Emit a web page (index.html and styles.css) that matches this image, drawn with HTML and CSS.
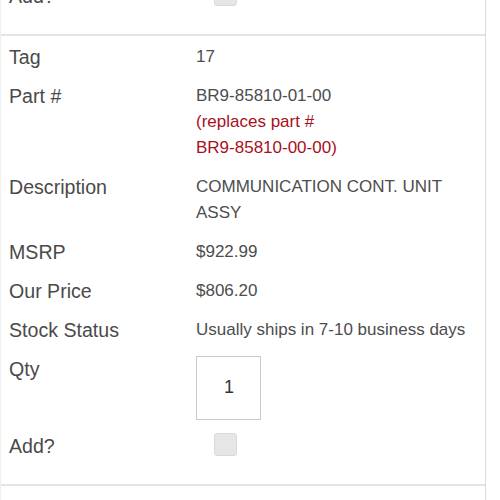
FILE: index.html
```html
<!DOCTYPE html>
<html>
<head>
<meta charset="utf-8">
<link rel="stylesheet" href="styles.css">
</head>
<body>
<div class="list">
  <div class="part part-prev">
    <div class="row">
      <div class="label">Add?</div>
      <div class="value"><input type="checkbox" class="check"></div>
    </div>
  </div>
  <div class="part">
    <div class="row">
      <div class="label">Tag</div>
      <div class="value">17</div>
    </div>
    <div class="row">
      <div class="label">Part #</div>
      <div class="value">BR9-85810-01-00<br><span class="replaces">(replaces part #<br>BR9-85810-00-00)</span></div>
    </div>
    <div class="row">
      <div class="label">Description</div>
      <div class="value">COMMUNICATION CONT. UNIT ASSY</div>
    </div>
    <div class="row">
      <div class="label">MSRP</div>
      <div class="value">$922.99</div>
    </div>
    <div class="row">
      <div class="label">Our Price</div>
      <div class="value">$806.20</div>
    </div>
    <div class="row">
      <div class="label">Stock Status</div>
      <div class="value">Usually ships in 7-10 business days</div>
    </div>
    <div class="row">
      <div class="label">Qty</div>
      <div class="value"><input type="text" class="qty" value="1"></div>
    </div>
    <div class="row">
      <div class="label">Add?</div>
      <div class="value"><input type="checkbox" class="check"></div>
    </div>
  </div>
  <div class="part">
    <div class="row">
      <div class="label">Tag</div>
      <div class="value">18</div>
    </div>
  </div>
</div>
</body>
</html>
```
FILE: styles.css
```css
html, body {
  margin: 0;
  padding: 0;
  background: #fff;
  overflow: hidden;
}
.list {
  width: 486px;
  box-sizing: border-box;
  border-left: 1px solid #f0f0f0;
  border-right: 1px solid #dcdcdc;
  font-family: "Liberation Sans", Arial, sans-serif;
}
.part {
  padding-top: 1px;
  padding-bottom: 19px;
  border-bottom: 2px solid #e4e4e4;
}
.part-prev {
  margin-top: -25px;
}
.row {
  display: grid;
  grid-template-columns: 187px 1fr;
}
.label {
  padding: 6.5px 8px;
  font-size: 19.6px;
  line-height: 26px;
  color: #4a4a4a;
}
.value {
  padding: 6.5px 8px;
  font-size: 17px;
  line-height: 26px;
  color: #4d4d4d;
}
.replaces {
  color: #a8101c;
}
.qty {
  display: block;
  box-sizing: border-box;
  width: 65px;
  height: 64px;
  margin: 0;
  border: 1px solid #cbcbcb;
  border-radius: 0;
  padding: 0 0 0 1px;
  text-align: center;
  font-family: "Liberation Sans", Arial, sans-serif;
  font-size: 18px;
  color: #333;
  background: #fff;
  outline: none;
}
.check {
  display: block;
  -webkit-appearance: none;
  appearance: none;
  box-sizing: border-box;
  width: 23px;
  height: 23px;
  margin: 0 0 0 18px;
  background: #e6e6e6;
  border: 1px solid #d9d9d9;
  border-radius: 3px;
}
```
